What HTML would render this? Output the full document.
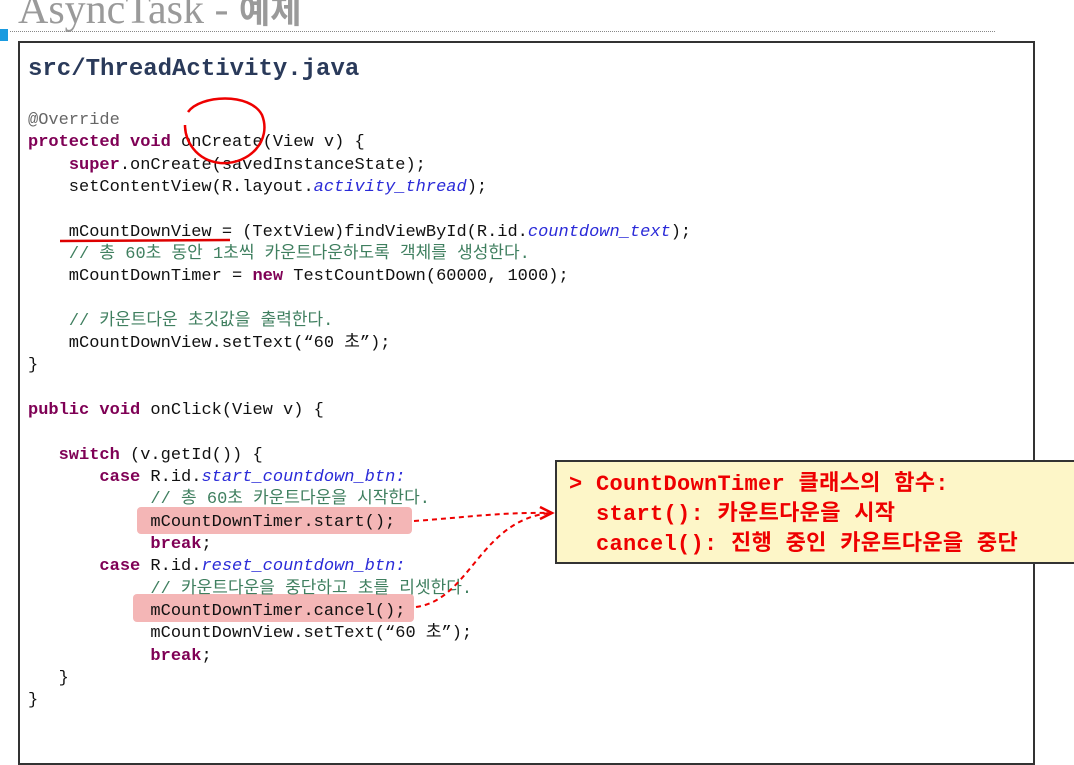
<!DOCTYPE html>
<html><head><meta charset="utf-8"><style>
body{margin:0;width:1074px;height:742px;background:#fff;overflow:hidden;position:relative;font-family:"Liberation Mono","Noto Sans CJK KR",monospace}
.t{position:absolute;left:18px;top:-16px;font:42px "Liberation Serif","Noto Sans CJK KR",serif;color:#9a9a9a;white-space:nowrap}
.box{position:absolute;left:18px;top:41px;width:1013px;height:720px;border:2px solid #333;background:#fff}
.code{position:absolute;left:28px;top:110px;font-size:17px;line-height:22.32px;white-space:pre;color:#111}
.k{color:#7f0055;font-weight:bold}.i{color:#2a2ad8;font-style:italic}.c{color:#3f7f5f}.a{color:#666}
.hl{position:absolute;background:#f4b6b6;border-radius:4px}
.call{position:absolute;left:555px;top:460px;width:530px;height:104px;background:#fdf6c8;border:2px solid #333;box-sizing:border-box}
.ct{position:absolute;left:12px;top:8px;font-size:22px;line-height:30px;font-weight:bold;color:#e00;white-space:pre;letter-spacing:0.3px}
</style></head><body>
<div class="t">AsyncTask - <b style="font-family:'Noto Sans CJK KR',sans-serif;font-size:34px">예제</b></div>
<div style="position:absolute;left:10px;top:31px;width:985px;border-top:1px dotted #888"></div>
<div style="position:absolute;left:0;top:29px;width:8px;height:12px;background:#1a9be0"></div>
<div class="box"></div>
<div style="position:absolute;left:28px;top:56px;font-size:24px;font-weight:bold;color:#2a3a5a">src/ThreadActivity.java</div>
<div class="hl" style="left:137px;top:507px;width:275px;height:27px"></div>
<div class="hl" style="left:133px;top:594px;width:281px;height:28px"></div>
<div class="code"><span class="a">@Override</span>
<span class="k">protected</span> <span class="k">void</span> onCreate(View v) {
    <span class="k">super</span>.onCreate(savedInstanceState);
    setContentView(R.layout.<span class="i">activity_thread</span>);

    mCountDownView = (TextView)findViewById(R.id.<span class="i">countdown_text</span>);
    <span class="c">// 총 60초 동안 1초씩 카운트다운하도록 객체를 생성한다.</span>
    mCountDownTimer = <span class="k">new</span> TestCountDown(60000, 1000);

    <span class="c">// 카운트다운 초깃값을 출력한다.</span>
    mCountDownView.setText(“60 초”);
}

<span class="k">public</span> <span class="k">void</span> onClick(View v) {

   <span class="k">switch</span> (v.getId()) {
       <span class="k">case</span> R.id.<span class="i">start_countdown_btn:</span>
            <span class="c">// 총 60초 카운트다운을 시작한다.</span>
            mCountDownTimer.start();
            <span class="k">break</span>;
       <span class="k">case</span> R.id.<span class="i">reset_countdown_btn:</span>
            <span class="c">// 카운트다운을 중단하고 초를 리셋한다.</span>
            mCountDownTimer.cancel();
            mCountDownView.setText(“60 초”);
            <span class="k">break</span>;
   }
}</div>
<div class="call"><div class="ct">&gt; CountDownTimer 클래스의 함수:
  start(): 카운트다운을 시작
  cancel(): 진행 중인 카운트다운을 중단</div></div>
<svg style="position:absolute;left:0;top:0" width="1074" height="742">
<path d="M188 112 C200 95 250 92 262 115 C272 140 250 165 220 163 C195 160 185 140 185 125" fill="none" stroke="#e00" stroke-width="2.5"/>
<path d="M60 241 L230 240" stroke="#d00" stroke-width="2.5"/>
<path d="M414 521 C460 518 500 512 550 513" fill="none" stroke="#e00" stroke-width="2" stroke-dasharray="5,4"/>
<path d="M416 607 C470 600 480 520 550 513" fill="none" stroke="#e00" stroke-width="2" stroke-dasharray="5,4"/>
<path d="M540 507 L552 513 L540 519" fill="none" stroke="#e00" stroke-width="2.5"/>
</svg>
</body></html>
